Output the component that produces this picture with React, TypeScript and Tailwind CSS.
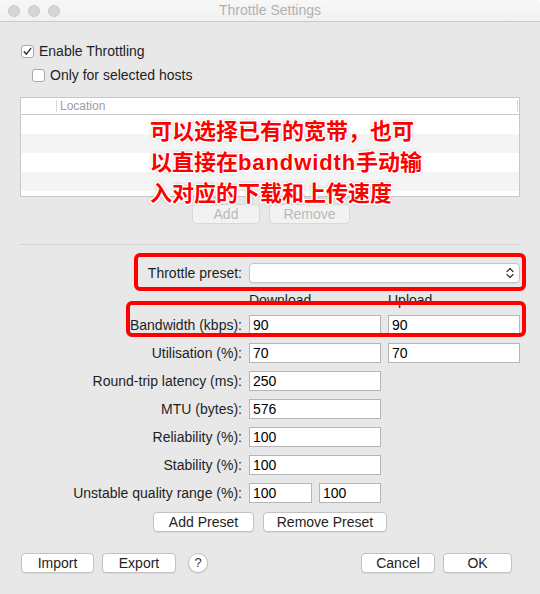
import React from 'react';

const FONT = "font-['Liberation_Sans','Noto_Sans',sans-serif]";

function MacButton({ label, width, disabled = false }: { label: string; width: string; disabled?: boolean }) {
  return (
    <button
      className={`h-[20px] ${width} rounded-[4px] border text-[14px] leading-[18px] ${
        disabled
          ? 'border-[#d9d9d9] bg-[#f2f2f2] text-[#b9b9b9]'
          : 'border-[#c2c2c2] bg-white text-[#1e1e1e] shadow-[0_1px_0_rgba(0,0,0,0.06)]'
      }`}
    >
      {label}
    </button>
  );
}

function Field({ value, width = 'w-[132px]' }: { value: string; width?: string }) {
  return (
    <input
      readOnly
      value={value}
      className={`h-[20px] ${width} border border-[#b5b5b5] bg-white pl-[3px] text-[14px] text-black outline-none`}
    />
  );
}

function Row({ label, children }: { label: string; children?: React.ReactNode }) {
  return (
    <div className="flex h-[20px] items-center gap-[7px]">
      <span className="w-[222px] text-right">{label}</span>
      {children}
    </div>
  );
}

function Checkbox({ checked }: { checked: boolean }) {
  return (
    <span className="flex h-[13px] w-[13px] items-center justify-center rounded-[3px] border border-[#a9a9a9] bg-white">
      {checked && (
        <svg width="11" height="11" viewBox="0 0 11 11">
          <path d="M2.2 5.8 L4.4 8.2 L8.8 2.4" fill="none" stroke="#2b2b2b" strokeWidth="1.4" strokeLinecap="round" strokeLinejoin="round" />
        </svg>
      )}
    </span>
  );
}

const ROWS = [
  { label: 'Utilisation (%):', values: ['70', '70'] },
  { label: 'Round-trip latency (ms):', values: ['250'] },
  { label: 'MTU (bytes):', values: ['576'] },
  { label: 'Reliability (%):', values: ['100'] },
  { label: 'Stability (%):', values: ['100'] },
];

export default function App() {
  return (
    <div className={`relative h-[594px] w-[540px] overflow-hidden rounded-t-[5px] bg-[#e8e8e8] text-[14px] text-[#1e1e1e] ${FONT}`}>
      {/* Title bar */}
      <div className="grid h-[22px] grid-cols-[1fr_auto_1fr] items-center border-b border-[#c9c9c9] bg-gradient-to-b from-[#f7f7f7] to-[#f1f1f1]">
        <div className="flex gap-[8px] pl-[8px]">
          <span className="h-[12px] w-[12px] rounded-full border border-[#c9c9c9] bg-[#d5d5d5]" />
          <span className="h-[12px] w-[12px] rounded-full border border-[#c9c9c9] bg-[#d5d5d5]" />
          <span className="h-[12px] w-[12px] rounded-full border border-[#c9c9c9] bg-[#d5d5d5]" />
        </div>
        <span className="text-[#b1b1b1]">Throttle Settings</span>
        <div />
      </div>

      <div className="flex flex-col px-[20px]">
        {/* Checkboxes */}
        <label className="mt-[19px] flex h-[20px] items-center gap-[5px] pl-[1px]">
          <Checkbox checked />
          Enable Throttling
        </label>
        <label className="mt-[4px] flex h-[20px] items-center gap-[5px] pl-[12px]">
          <Checkbox checked={false} />
          Only for selected hosts
        </label>

        {/* Hosts table */}
        <div className="mt-[12px] flex h-[100px] flex-col border border-[#c8c8c8] bg-white">
          <div className="flex h-[17px] shrink-0 items-center border-b border-[#c8c8c8]">
            <span className="w-[35px]" />
            <span className="h-[12px] w-px bg-[#d6d6d6]" />
            <span className="flex-1 pl-[3px] text-[12px] text-[#9c9c9c]">Location</span>
            <span className="mr-[1px] h-[12px] w-px bg-[#d6d6d6]" />
          </div>
          <div className="h-[19px] bg-white" />
          <div className="h-[19px] bg-[#f4f4f4]" />
          <div className="h-[19px] bg-white" />
          <div className="h-[19px] bg-[#f4f4f4]" />
          <div className="flex-1 bg-white" />
        </div>

        <div className="mt-[7px] flex justify-center gap-[9px] pl-[2px]">
          <MacButton label="Add" width="w-[68px]" disabled />
          <MacButton label="Remove" width="w-[81px]" disabled />
        </div>

        <div className="mt-[20px] h-px bg-[#d2d2d2]" />

        {/* Throttle form */}
        <div className="mt-[18px] flex flex-col gap-[8px]">
          <Row label="Throttle preset:">
            <div className="flex h-[20px] w-[271px] items-center justify-end rounded-[4px] border border-[#c4c4c4] bg-white pr-[5px] shadow-[0_1px_0_rgba(0,0,0,0.05)]">
              <svg width="8" height="12" viewBox="0 0 8 12">
                <path d="M1 4.5 L4 1.5 L7 4.5 M1 7.5 L4 10.5 L7 7.5" fill="none" stroke="#333" strokeWidth="1.2" strokeLinecap="round" strokeLinejoin="round" />
              </svg>
            </div>
          </Row>
          <div className="flex h-[16px] items-center gap-[7px] leading-[16px]">
            <span className="w-[222px]" />
            <span className="w-[132px] pt-[2px]">Download</span>
            <span className="w-[132px] pt-[2px]">Upload</span>
          </div>
          <Row label="Bandwidth (kbps):">
            <Field value="90" />
            <Field value="90" />
          </Row>
          {ROWS.map((r) => (
            <Row key={r.label} label={r.label}>
              {r.values.map((v, i) => (
                <Field key={i} value={v} />
              ))}
            </Row>
          ))}
          <Row label="Unstable quality range (%):">
            <Field value="100" width="w-[63px]" />
            <Field value="100" width="w-[62px]" />
          </Row>
        </div>

        <div className="mt-[9px] flex justify-center gap-[9px]">
          <MacButton label="Add Preset" width="w-[101px]" />
          <MacButton label="Remove Preset" width="w-[124px]" />
        </div>

        {/* Footer */}
        <div className="mt-[21px] flex items-center justify-between pl-[1px] pr-[8px]">
          <div className="flex items-center gap-[8px]">
            <MacButton label="Import" width="w-[73px]" />
            <MacButton label="Export" width="w-[74px]" />
            <button className="ml-[4px] flex h-[20px] w-[20px] items-center justify-center rounded-full border border-[#c2c2c2] bg-white text-[13px] text-[#333] shadow-[0_1px_1px_rgba(0,0,0,0.1)]">
              ?
            </button>
          </div>
          <div className="flex items-center gap-[8px]">
            <MacButton label="Cancel" width="w-[74px]" />
            <MacButton label="OK" width="w-[69px]" />
          </div>
        </div>
      </div>

      {/* Annotation overlay */}
      <div className="pointer-events-none absolute left-[126px] top-[301px] h-[36px] w-[400px] rounded-[6px] border-[4px] border-[#ff0000]" />
      <div className="pointer-events-none absolute left-[134px] top-[253px] h-[38px] w-[392px] rounded-[6px] border-[4px] border-[#ff0000]" />
      <div className="pointer-events-none absolute left-[150px] top-[116px] font-['Liberation_Sans','Noto_Sans_CJK_SC',sans-serif] text-[22px] font-bold leading-[31px] text-[#ff0000] [text-shadow:1.5px_0_0_#fff,-1.5px_0_0_#fff,0_1.5px_0_#fff,0_-1.5px_0_#fff,1px_1px_0_#fff,-1px_-1px_0_#fff,1px_-1px_0_#fff,-1px_1px_0_#fff,0_0_4px_rgba(0,0,0,0.35)]">
        <div>可以选择已有的宽带，也可</div>
        <div>
          以直接在<span className="tracking-[0.9px]">bandwidth</span>手动输
        </div>
        <div>入对应的下载和上传速度</div>
      </div>
    </div>
  );
}
